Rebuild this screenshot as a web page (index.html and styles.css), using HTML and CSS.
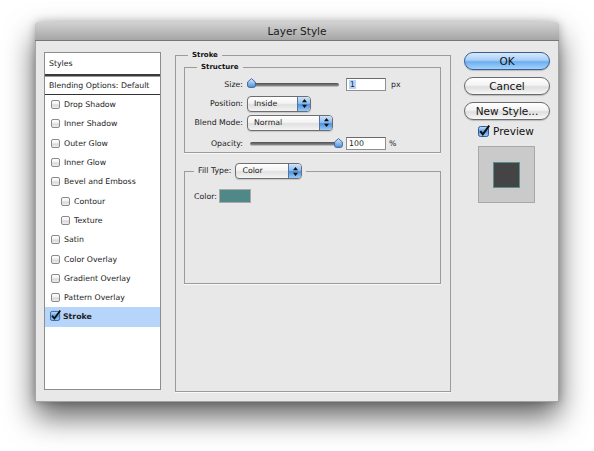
FILE: index.html
```html
<!DOCTYPE html>
<html lang="en">
<head>
    <meta charset="UTF-8">
    <title>Layer Style</title>
    <link rel="stylesheet" href="styles.css">
</head>
<body>
<div class="window">
    <div class="titlebar">Layer Style</div>
    <div class="content">
        <div class="list">
            <div class="list-head">Styles</div>
            <div class="list-blend">Blending Options: Default</div>
            <div class="item"><span class="cb"></span>Drop Shadow</div>
            <div class="item"><span class="cb"></span>Inner Shadow</div>
            <div class="item"><span class="cb"></span>Outer Glow</div>
            <div class="item"><span class="cb"></span>Inner Glow</div>
            <div class="item"><span class="cb"></span>Bevel and Emboss</div>
            <div class="item sub"><span class="cb"></span>Contour</div>
            <div class="item sub"><span class="cb"></span>Texture</div>
            <div class="item"><span class="cb"></span>Satin</div>
            <div class="item"><span class="cb"></span>Color Overlay</div>
            <div class="item"><span class="cb"></span>Gradient Overlay</div>
            <div class="item"><span class="cb"></span>Pattern Overlay</div>
            <div class="item selected">
                <svg class="cb-on" width="11" height="11" viewBox="0 0 12 12">
                    <defs>
                        <linearGradient id="cbA" x1="0" y1="0" x2="0" y2="1">
                            <stop offset="0" stop-color="#c6e0fa"/>
                            <stop offset="0.5" stop-color="#5d9fe6"/>
                            <stop offset="1" stop-color="#9acbf7"/>
                        </linearGradient>
                    </defs>
                    <rect x="0.5" y="1.5" width="10" height="10" rx="2" fill="url(#cbA)" stroke="#2f5b97"/>
                    <path d="M2.3 6.2 L4.8 9.4 L11.2 0.6" fill="none" stroke="#0d0d0d" stroke-width="1.9"/>
                </svg>
                <b>Stroke</b>
            </div>
        </div>

        <fieldset class="group stroke">
            <legend>Stroke</legend>
            <fieldset class="group structure">
                <legend>Structure</legend>
                <div class="row">
                    <span class="label">Size:</span>
                    <div class="slider">
                        <div class="track"></div>
                        <svg class="thumb thumb-left" width="9" height="10" viewBox="0 0 9 10">
                            <defs>
                                <linearGradient id="thA" x1="0" y1="0" x2="0" y2="1">
                                    <stop offset="0" stop-color="#d9eafc"/>
                                    <stop offset="1" stop-color="#4f90dc"/>
                                </linearGradient>
                            </defs>
                            <path d="M4.5 0.6 L8.4 4 V7.6 Q8.4 9.4 6.6 9.4 H2.4 Q0.6 9.4 0.6 7.6 V4 Z" fill="url(#thA)" stroke="#36609c" stroke-width="0.9"/>
                        </svg>
                    </div>
                    <div class="field"><span class="hl">1</span></div>
                    <span class="unit">px</span>
                </div>
                <div class="row">
                    <span class="label">Position:</span>
                    <div class="popup pos">
                        <span class="popup-text">Inside</span>
                        <span class="popup-arrows">
                            <svg width="5" height="9" viewBox="0 0 5 9"><path d="M2.5 0 L5 3.3 H0 Z M0 5.7 H5 L2.5 9 Z" fill="#111"/></svg>
                        </span>
                    </div>
                </div>
                <div class="row">
                    <span class="label">Blend Mode:</span>
                    <div class="popup blend">
                        <span class="popup-text">Normal</span>
                        <span class="popup-arrows">
                            <svg width="5" height="9" viewBox="0 0 5 9"><path d="M2.5 0 L5 3.3 H0 Z M0 5.7 H5 L2.5 9 Z" fill="#111"/></svg>
                        </span>
                    </div>
                </div>
                <div class="row row-opacity">
                    <span class="label">Opacity:</span>
                    <div class="slider slider-op">
                        <div class="track"></div>
                        <svg class="thumb thumb-right" width="9" height="10" viewBox="0 0 9 10">
                            <defs>
                                <linearGradient id="thB" x1="0" y1="0" x2="0" y2="1">
                                    <stop offset="0" stop-color="#d9eafc"/>
                                    <stop offset="1" stop-color="#4f90dc"/>
                                </linearGradient>
                            </defs>
                            <path d="M4.5 0.6 L8.4 4 V7.6 Q8.4 9.4 6.6 9.4 H2.4 Q0.6 9.4 0.6 7.6 V4 Z" fill="url(#thB)" stroke="#36609c" stroke-width="0.9"/>
                        </svg>
                    </div>
                    <div class="field field-op">100</div>
                    <span class="unit">%</span>
                </div>
            </fieldset>

            <fieldset class="group fill">
                <legend>
                    <span>Fill Type:</span>
                    <div class="popup filltype">
                        <span class="popup-text">Color</span>
                        <span class="popup-arrows">
                            <svg width="5" height="9" viewBox="0 0 5 9"><path d="M2.5 0 L5 3.3 H0 Z M0 5.7 H5 L2.5 9 Z" fill="#111"/></svg>
                        </span>
                    </div>
                </legend>
                <div class="color-row">
                    <span>Color:</span>
                    <div class="swatch"></div>
                </div>
            </fieldset>
        </fieldset>

        <div class="side">
            <div class="btn btn-default">OK</div>
            <div class="btn">Cancel</div>
            <div class="btn btn-last">New Style...</div>
            <div class="preview-check">
                <svg width="12" height="12" viewBox="0 0 12 12">
                    <defs>
                        <linearGradient id="cbB" x1="0" y1="0" x2="0" y2="1">
                            <stop offset="0" stop-color="#c6e0fa"/>
                            <stop offset="0.5" stop-color="#5d9fe6"/>
                            <stop offset="1" stop-color="#9acbf7"/>
                        </linearGradient>
                    </defs>
                    <rect x="0.5" y="1.5" width="10" height="10" rx="2" fill="url(#cbB)" stroke="#2f5b97"/>
                    <path d="M2.3 6.2 L4.8 9.4 L11.2 0.6" fill="none" stroke="#0d0d0d" stroke-width="1.9"/>
                </svg>
                <span>Preview</span>
            </div>
            <div class="preview">
                <div class="preview-square"></div>
            </div>
        </div>
    </div>
</div>
</body>
</html>
```

FILE: styles.css
```css
body{
    margin:0;
    padding:22px 0 49px 35px;
    background:#fff;
    font-family:"DejaVu Sans", sans-serif;
    color:#111;
}
.window{
    width:524px;
    height:380px;
    box-sizing:border-box;
    background:#e8e8e8;
    border:1px solid #a3a3a3;
    border-top:none;
    border-radius:5px 5px 0 0;
    box-shadow:0 15px 30px rgba(0,0,0,0.62), 0 0 8px rgba(0,0,0,0.25);
}
.titlebar{
    height:18px;
    line-height:18px;
    text-align:center;
    font-size:10.5px;
    color:#1a1a1a;
    background:linear-gradient(#d2d2d2, #a6a6a6);
    border-bottom:1px solid #777;
    border-radius:5px 5px 0 0;
    margin:0 -1px;
}
.content{
    display:flex;
    align-items:flex-start;
    padding:0 8px;
}

/* styles list */
.list{
    margin-top:11px;
    width:117px;
    height:338px;
    box-sizing:border-box;
    border:1px solid #8d8d8d;
    background:#fff;
    font-size:7.8px;
    color:#222;
}
.list-head{
    height:21px;
    line-height:21px;
    padding-left:4px;
    border-bottom:2px solid #3a3a3a;
}
.list-blend{
    height:17px;
    line-height:17px;
    padding-left:4px;
    border-top:1px solid #9a9a9a;
    border-bottom:1px solid #333;
}
.item{
    height:19.3px;
    display:flex;
    align-items:center;
    padding-left:6px;
}
.item.sub{
    padding-left:16px;
}
.item.selected{
    background:#b7d5fb;
    padding-left:5px;
}
.item.selected b{
    margin-left:2px;
}
.cb{
    width:7px;
    height:7px;
    margin-right:4px;
    border:1px solid #8a8a8a;
    border-radius:2px;
    background:linear-gradient(#fdfdfd 0, #f2f2f2 45%, #d6d6d6 55%, #efefef 100%);
}
.cb-on{
    margin-top:-2px;
}

/* group boxes */
.group{
    margin:0;
    min-width:0;
    box-sizing:border-box;
    border:1px solid #9b9b9b;
    box-shadow:0 1px 0 #f8f8f8;
}
.group legend{
    font-weight:bold;
    font-size:7px;
    line-height:10px;
    padding:0 4px;
}
.stroke{
    margin:9px 0 0 14px;
    width:276px;
    height:342px;
    padding:0 9px 0 8px;
}
.stroke > legend{
    margin-left:4px;
}
.structure{
    margin-top:2px;
    padding:4px 0 0 0;
    display:flex;
    flex-direction:column;
    gap:2px;
}
.structure > legend{
    margin-left:12px;
}
.row{
    height:17px;
    display:flex;
    align-items:center;
    font-size:7.8px;
    color:#222;
}
.row-opacity{
    margin-top:2px;
}
.label{
    width:58px;
    text-align:right;
    margin-right:4px;
}
.slider{
    position:relative;
    width:92px;
    height:17px;
    margin-right:7px;
}
.slider-op{
    margin-left:3px;
    margin-right:4px;
}
.track{
    margin-top:7px;
    height:3px;
    border-radius:2px;
    background:linear-gradient(#4e4e4e, #8c8c8c);
    border-bottom:1px solid #bdbdbd;
}
.thumb{
    position:absolute;
    top:2px;
}
.thumb-left{
    left:0;
}
.thumb-right{
    right:-1px;
    top:3px;
}
.field{
    width:36px;
    height:11px;
    line-height:11px;
    padding-left:2px;
    background:#fff;
    border:1px solid #8f8f8f;
    border-top-color:#6a6a6a;
}
.hl{
    background:#b5d5ff;
    padding:0 1px;
}
.unit{
    margin-left:5px;
}
.row-opacity .unit{
    margin-left:3px;
}

/* popup buttons */
.popup{
    height:14px;
    display:flex;
    border:1px solid #6e6e6e;
    border-radius:4px;
    background:linear-gradient(#ffffff 0, #f3f3f3 45%, #e0e0e0 55%, #f4f4f4 100%);
    font-weight:normal;
    font-size:7.8px;
    line-height:14px;
    box-shadow:0 1px 1px rgba(0,0,0,0.15);
}
.popup-text{
    flex:1;
    padding-left:6px;
}
.popup-arrows{
    width:12px;
    display:flex;
    align-items:center;
    justify-content:center;
    border-left:1px solid #56739f;
    border-radius:0 3px 3px 0;
    background:linear-gradient(#cfe4fa 0, #8fbdf0 45%, #4d92e0 55%, #9acbf6 100%);
}
.pos{
    width:62px;
}
.blend{
    width:84px;
}
.filltype{
    width:65px;
}

.fill{
    margin-top:10px;
    height:121px;
    padding:0 0 0 9px;
}
.fill > legend{
    display:flex;
    align-items:center;
    gap:4px;
    height:16px;
    font-weight:normal;
    font-size:7.8px;
    color:#222;
}
.color-row{
    margin-top:10px;
    height:14px;
    display:flex;
    align-items:center;
    gap:2px;
    font-size:7.8px;
    color:#222;
}
.swatch{
    width:30px;
    height:12px;
    background:#4f8886;
    border:1px solid #a9a9a9;
}

/* right column */
.side{
    margin:11px 0 0 13px;
    width:86px;
    display:flex;
    flex-direction:column;
}
.btn{
    height:16px;
    line-height:16px;
    margin-bottom:6px;
    text-align:center;
    font-size:10.5px;
    border:1px solid #6b6b6b;
    border-radius:9px;
    background:linear-gradient(#ffffff 0, #f3f3f3 45%, #dedede 55%, #f7f7f7 100%);
    box-shadow:0 1px 1px rgba(0,0,0,0.2);
}
.btn-default{
    border-color:#3a5c93;
    background:linear-gradient(#d6e9fc 0, #a9cff6 45%, #6daef0 55%, #a4d2fb 100%);
}
.btn + .btn{
    margin-top:1px;
}
.btn-last{
    margin-bottom:4px;
}
.preview-check{
    display:flex;
    align-items:center;
    gap:3px;
    margin-left:14px;
    height:14px;
    font-size:10.5px;
}
.preview{
    margin:8px 0 0 14px;
    width:57px;
    height:57px;
    box-sizing:border-box;
    border:1px solid #a8a8a8;
    background:#cacaca;
    display:flex;
    align-items:center;
    justify-content:center;
}
.preview-square{
    width:25px;
    height:24px;
    background:#444;
    border:1px solid #5b8f8c;
}
```
